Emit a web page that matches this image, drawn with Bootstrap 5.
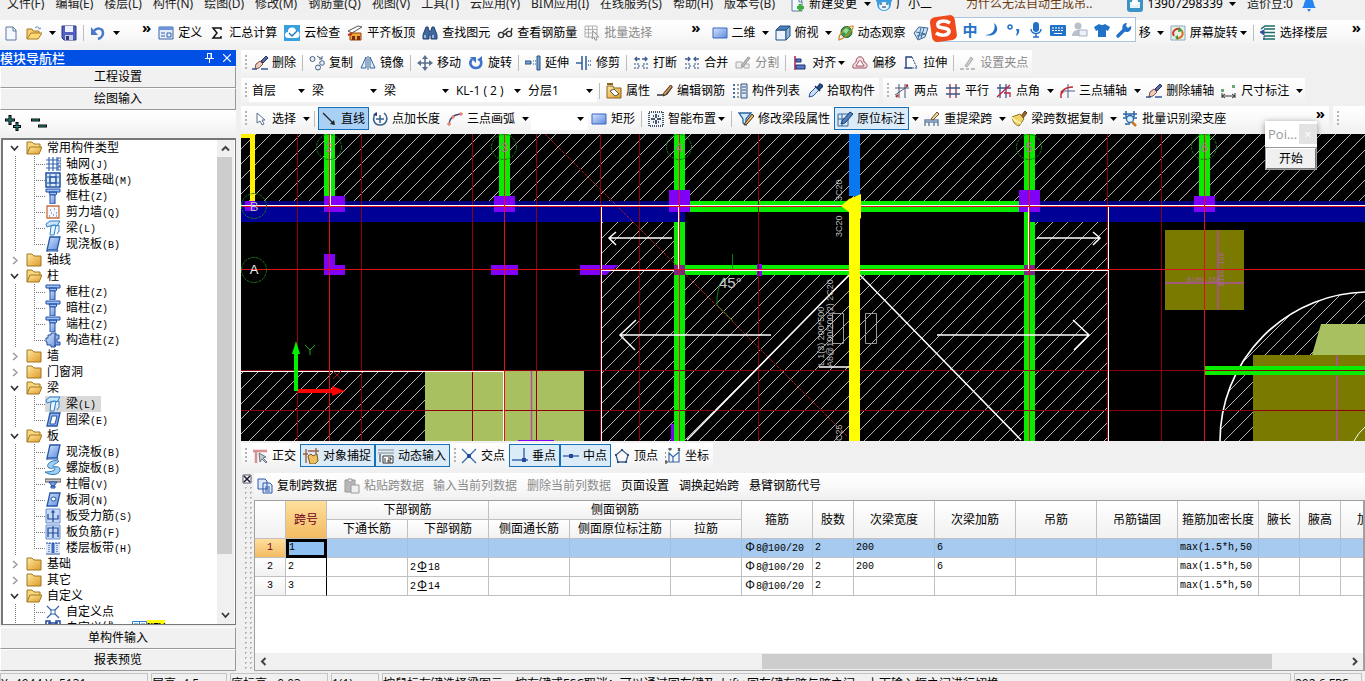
<!DOCTYPE html>
<html lang="zh-CN">
<head>
<meta charset="utf-8">
<meta name="viewport" content="width=device-width, initial-scale=1">
<title>梁原位标注</title>
<link href="https://cdn.jsdelivr.net/npm/bootstrap@5.3.0/dist/css/bootstrap.min.css" rel="stylesheet">
<style>
:root{--face:#f0f0f0;--edge:#a0a0a0;--pick:#1470b8}
body{font:12px/16px "Open Sans","Noto Sans CJK SC",sans-serif;color:#000;background:var(--face);overflow:hidden}
.shell{height:100vh}
.ic{width:16px;height:16px;flex:none}
/* menu strip: the window is scrolled a little under the top edge */
.menus{height:32px;margin-top:-12px;padding-left:7px;flex:none;position:relative;font-family:"Noto Sans","Noto Sans CJK SC",sans-serif}
.menus a{color:#222;text-decoration:none;margin-right:11px}
.menus .tip{color:#6b3a10}
.bar{height:25px;flex:none;background:linear-gradient(#fff,#fafafa 50%,#f1f1f1)}
.bar.main{height:26px}
.strip{height:25px;flex:none;margin-bottom:3px}
.strip.snaps{margin:2px 0 5px}
.grip{width:8px;height:15px;flex:none;background:repeating-linear-gradient(#b4b4b4 0 2px,transparent 2px 4px) 4px 0/2px 100% no-repeat}
.tl{display:inline-flex;align-items:center;gap:4px;height:23px;flex:none;border:1px solid transparent;background:none;padding:0 3px 0 2px;color:#000;font-size:12px;line-height:16px;white-space:nowrap;border-radius:0}
.tl.on{background:#dcebf8;border-color:var(--pick)}
.tl.deep{background:#a9d1f5}
.tl:disabled{color:#8a8a8a}
.tl.txt{padding:0 4px}
.tl .arw{margin-left:-2px}
.arw{width:7px;height:4px;flex:none}
.drop{border:0;background:none;width:12px;height:23px;padding:0;display:inline-flex;align-items:center;justify-content:center;flex:none}
.sep{width:1px;height:16px;background:#bdbdbd;margin:0 3px 0 2px;flex:none}
.pick{appearance:none;border:0;border-radius:0;height:23px;width:72px;padding:0 18px 0 3px;flex:none;font:inherit;color:#000;background:#fff url("data:image/svg+xml,%3Csvg xmlns='http://www.w3.org/2000/svg' width='7' height='4'%3E%3Cpath d='M0 0h7L3.500 4z'/%3E%3C/svg%3E") right 4px center no-repeat}
.pick.short{width:60px}
.pick.radius{width:57px}
.more{border:0;background:none;padding:2px 4px 0;font:700 15px/10px "Open Sans",sans-serif;align-self:start}
.sogou-gap{flex:0 0 200px}
/* navigation panel */
.side{width:236px;flex:none;margin-right:5px}
.side h1{font-size:13px;line-height:16px;margin:0;height:16px;background:#0050e6;color:#fff}
.side h1 button{border:0;background:none;padding:0;color:#fff;width:18px;height:16px;display:flex;align-items:center;justify-content:center}
.sect{display:block;width:100%;height:22px;flex:none;padding:0;background:#f1f1f1;border:1px solid #999;border-top-color:#fff;border-left-color:#fff;font-size:12px;line-height:18px;text-align:center}
.tree{margin:3px 0 2px 1px;border:1px solid #777;border-width:2px 1px 1px 2px;background:#fff;min-height:0;flex:1}
.tree ul{list-style:none;margin:0;padding:0}
.tree .row16{height:16px;display:flex;align-items:center;white-space:nowrap}
.tree .root{padding-left:7px}
.tree .root .ic{margin:0 5px 0 7px}
.kids{background:repeating-linear-gradient(#777 0 1px,transparent 1px 2px) 12px 0/1px 100% no-repeat,repeating-linear-gradient(#777 0 1px,transparent 1px 2px) 31px 0/1px calc(100% - 8px) no-repeat}
.kids .row16{padding-left:31px}
.kids .row16::before{content:"";width:11px;height:1px;flex:none;background:repeating-linear-gradient(90deg,#777 0 1px,transparent 1px 2px)}
.kids span{padding:0 5px 0 5px;height:16px}
.kids .sel .ic,.kids .sel span{background:#d9d9d9}
.kids span i,.mono{font:10px/16px "Liberation Mono",monospace}
.vbar{width:17px;flex:none;background:#f0f0f0;margin-right:1px}
.vbar button,.hbar button{border:0;background:none;padding:0;width:17px;height:17px;display:flex;align-items:center;justify-content:center;flex:none}
.vbar .thumb{flex:0 0 397px;background:#cdcdcd;width:15px}
.hbar{height:17px;background:#f0f0f0;flex:none}
.hbar .thumb{width:46%;height:15px;background:#cdcdcd}
.hbar .rest{flex:0 0 74px}
/* drawing area */
.cad{flex:1;min-height:0;background:#000}
.cad svg{display:block;width:100%;height:100%}
/* span data grid */
.pane{height:198px;flex:none}
.dots{width:9px;flex:1;margin-left:2px;background:radial-gradient(circle,#b4b4b4 1px,transparent 1px) 0 0/5px 5px}
.gridbox{margin-top:2px;border:1px solid var(--edge);border-width:1px 2px 1px 1px;background:#fff;min-width:0}
.spans{table-layout:fixed;width:1149px;border-collapse:separate;border-spacing:0}
.spans th,.spans td{border:solid #c0c0c0;border-width:0 1px 1px 0;height:19px;padding:0 2px;line-height:16px;white-space:nowrap;overflow:hidden}
.spans th{font-weight:400;text-align:center;background:linear-gradient(#fff,#f1f1f1)}
.spans tbody td{font:10px/16px "Liberation Mono","Noto Sans CJK SC",monospace}
.spans td b{display:inline-block;font:12px/14px "Noto Sans CJK SC",sans-serif;width:12px;text-align:center}
.spans td b.hrb{text-decoration:underline}
.spans tbody th{font:10px/16px "Liberation Mono",monospace}
.spans .hot th.hd,.spans th.key{background:linear-gradient(#ffdf9c,#f2bb62);color:#700020}
.spans .hot td{background:#a6caf0;border-right-color:#9dc0e4}
.spans .hot td.cur{background:#8fc1f2;outline:3px solid #000;outline-offset:-3px;padding-left:3px}
.spans td.idx{border-right-color:#000}
.status{height:8px;flex:none;overflow:hidden;margin-top:2px}
.status div{border:1px solid #c4c4c4;height:24px;padding-top:2px;line-height:16px;flex:none;white-space:nowrap;overflow:hidden;margin-right:3px}
/* floating windows */
.ime{position:absolute;top:17px;right:229px;z-index:5;height:25px;background:#fff;border:1px solid #a8c4e0;padding-left:23px;color:#2272c8}
.ime .logo{position:absolute;left:-7px;top:-4px;width:30px;height:30px}
.ime button{border:0;background:none;padding:0;width:22px;height:22px;display:flex;align-items:center;justify-content:center;color:inherit;font:700 15px/22px "Noto Sans CJK SC",sans-serif}
.ime button svg{width:16px;height:16px}
.poi{position:absolute;top:121px;right:48px;width:52px;z-index:5;background:#fff;box-shadow:0 1px 6px #0006}
.poi header{height:26px;color:#999;padding-left:3px;line-height:26px;font-size:13px}
.poi header button{border:0;background:#e3e3e3;color:#fff;width:18px;height:20px;line-height:16px;padding:0}
.poi .go{width:52px;height:23px;border:2px solid;border-color:#fff #777 #777 #fff;outline:1px solid #999;outline-offset:-1px;background:#f0f0f0;padding:0;font-size:12px;line-height:16px}
</style>
</head>
<body>
<svg width="0" height="0" class="position-absolute" aria-hidden="true">
<defs>
<linearGradient id="gb" x1="0" y1="0" x2="1" y2="1"><stop offset="0" stop-color="#d5e4fb"/><stop offset="1" stop-color="#5b8ae0"/></linearGradient>
<linearGradient id="gy" x1="0" y1="0" x2="1" y2="1"><stop offset="0" stop-color="#ffe9a0"/><stop offset="1" stop-color="#e09a28"/></linearGradient>
<symbol id="arw" viewBox="0 0 7 4"><path d="M0 0h7L3.500 4z"/></symbol>
<symbol id="new" viewBox="0 0 16 16"><path d="M3 2h7l3 3v10H3z" fill="#f4f9ff" stroke="#5d7ba0"/><path d="M10 2v4h3" fill="none" stroke="#5d7ba0"/></symbol>
<symbol id="open" viewBox="0 0 16 16"><path d="M1 14V4h5l1 2h6v3" fill="#f5cf72" stroke="#a87a20"/><path d="M1 14l4-6h11l-4 6z" fill="#ffd976" stroke="#a87a20"/><path d="M9 3c2-2 4-1 4 1l2-1" fill="none" stroke="#5080b0"/></symbol>
<symbol id="save" viewBox="0 0 16 16"><path d="M1 1h14v14H3l-2-2z" fill="#5360c0" stroke="#303880"/><path d="M4 1h8v6H4z" fill="#eef2ff"/><path d="M4 10h8v5H4z" fill="#c8d0e8"/><path d="M5 11h3v4H5z" fill="#303880"/></symbol>
<symbol id="undo" viewBox="0 0 16 16"><path d="M4 6c3-4 9-3 9 2 0 3-2 5-5 6" fill="none" stroke="#4a78cc" stroke-width="2.500"/><path d="M1 2v8h7z" fill="#4a78cc"/></symbol>
<symbol id="def" viewBox="0 0 16 16"><path d="M1 2h14v12H1z" fill="#e4eefc" stroke="#3a62a8"/><path d="M1 2h14v3H1z" fill="#6c92d8"/><path d="M3 8h4m-4 3h4M9 8h4v4H9z" stroke="#3a62a8" fill="none"/></symbol>
<symbol id="sum" viewBox="0 0 16 16"><path d="M12 5V3H4l4 5-4 5h8v-2" fill="none" stroke="#111" stroke-width="1.500"/></symbol>
<symbol id="cloud" viewBox="0 0 16 16"><path d="M0 0h16v16H0z" fill="#38a0dc"/><path d="M4 13a3 3 0 010-6 4 4 0 018-1 3.500 3.500 0 010 7z" fill="#fff"/><path d="M5 8l3 3 5-5" fill="none" stroke="#2080c0" stroke-width="1.500"/></symbol>
<symbol id="flat" viewBox="0 0 16 16"><path d="M1 6l10-5 4 1-10 6z" fill="#fff" stroke="#555"/><path d="M3 8h11v7H3z" fill="#f0a838" stroke="#9a4010"/><path d="M5 15v-4h3v4M10 15v-4h3v4" fill="#7a2c10"/><path d="M1 10l4-1" stroke="#c03018" stroke-width="2"/></symbol>
<symbol id="find" viewBox="0 0 16 16"><path d="M1 14v-4l3-8h2l1 4h2l1-4h2l3 8v4H9v-4H7v4z" fill="#4068a0" stroke="#243f70"/><path d="M3 10v3m8-3v3" stroke="#b8d0f0" stroke-width="1.500"/></symbol>
<symbol id="look" viewBox="0 0 16 16"><g fill="none" stroke="#333" stroke-width="1.400"><circle cx="4" cy="10" r="2.600"/><circle cx="12" cy="9" r="2.600"/><path d="M6.500 9.500l3-1M6 7l5-4M14 7l1-4"/></g></symbol>
<symbol id="batch" viewBox="0 0 16 16"><path d="M1 1h12v11H1zM1 4.500h12M1 8h12M4.500 1v12M8.500 1v12" fill="none" stroke="#b0b0b0"/><path d="M9 6l6 6-3 0 1 3-2 0-1-3-2 2z" fill="#eee" stroke="#999"/></symbol>
<symbol id="rect" viewBox="0 0 16 16"><path d="M1 3h14v10H1z" fill="url(#gb)" stroke="#3c64c0"/></symbol>
<symbol id="cube" viewBox="0 0 16 16"><path d="M1 5h10v10H1z" fill="#eaf3ff" stroke="#24507c"/><path d="M1 5l4-4h10l-4 4z" fill="#4c80b8" stroke="#24507c"/><path d="M15 1v10l-4 4V5z" fill="#8fb8e0" stroke="#24507c"/></symbol>
<symbol id="orbit" viewBox="0 0 16 16"><circle cx="8.500" cy="7" r="5.500" fill="#38a050" stroke="#1c6030"/><path d="M1 15C0 9 9 1 15 1c1 3-7 12-14 14z" fill="none" stroke="#c88828" stroke-width="1.200"/><path d="M5 6l3-3 3 2-3 4z" fill="#8fe09a"/></symbol>
<symbol id="part" viewBox="0 0 16 16"><path d="M1 8l5-6 9 1-3 9-7 3z" fill="#cfe3f4" stroke="#3a6a98"/><path d="M3 7l9 2M8 3L5 14M11 3L8 13M4 11l9-2" stroke="#3a6a98"/></symbol>
<symbol id="spin" viewBox="0 0 16 16"><path d="M1 1h14v14H1z" fill="#e4f2e0" stroke="#88a8c8"/><path d="M4 11C1 6 7 2 11 5" fill="none" stroke="#d43838" stroke-width="2"/><path d="M12 6c2 4-1 8-6 7" fill="none" stroke="#e06a28" stroke-width="2"/><path d="M9 2l4 4-5 1zM8 15l-3-3 3-2z" fill="#3c9c40"/></symbol>
<symbol id="floors" viewBox="0 0 16 16"><path d="M1 4l4-3h10M4 4h11M4 7.500h11M4 11h11M3 14h12" fill="none" stroke="#186c68" stroke-width="1.500"/><path d="M0 7l4-2v5zM4 11v4" fill="#3450a0" stroke="#3450a0"/></symbol>
<symbol id="brush" viewBox="0 0 16 16"><path d="M9 6l5-5 2 2-5 5z" fill="#5a6ca8" stroke="#27305c"/><path d="M4 9l4-3 3 3-4 4-4 1z" fill="#e8ccc0" stroke="#8a4a3c"/><path d="M0 14h5m4 0h7" stroke="#3458a0" stroke-width="1.500"/></symbol>
<symbol id="copy" viewBox="0 0 16 16"><g fill="#e8f0fc" stroke="#486080"><circle cx="3.500" cy="4" r="2.500"/><circle cx="13" cy="8" r="2.300"/><circle cx="9" cy="12.500" r="2.500"/><path d="M8 1l5 3m0 0V1m0 3h-3" fill="none"/></g></symbol>
<symbol id="mirror" viewBox="0 0 16 16"><path d="M6 2v11H1zM10 2v11h5z" fill="#e4eefa" stroke="#36649c"/><path d="M8 1v14" stroke="#36649c"/></symbol>
<symbol id="move" viewBox="0 0 16 16"><path d="M8 2v12M2 8h12" stroke="#5a708c" stroke-width="1.600"/><path d="M8 0l3 4H5zM8 16l3-4H5zM0 8l4-3v6zM16 8l-4-3v6z" fill="#5a708c"/></symbol>
<symbol id="turn" viewBox="0 0 16 16"><path d="M4 4c-4 5 0 9 4 9s7-4 4-9" fill="none" stroke="#3c74cc" stroke-width="2.600"/><path d="M2 2h6v6zM14 1v6l-5-2z" fill="#3c74cc"/></symbol>
<symbol id="extend" viewBox="0 0 16 16"><path d="M0 6h6v3H0zM12 1h3v14h-3z" fill="#78a4dc" stroke="#24507c"/><path d="M8 6h3M8 9h3" stroke="#24507c" stroke-dasharray="1 1"/></symbol>
<symbol id="trim" viewBox="0 0 16 16"><path d="M6 1v14M10 1v14M0 8h6" stroke="#36649c" stroke-width="1.600"/><path d="M12 6h3M12 10h3" stroke="#36649c" stroke-width="1.300" stroke-dasharray="1 1"/></symbol>
<symbol id="break" viewBox="0 0 16 16"><path d="M7 4H2m2-2L2 4l2 2M9 4h5m-2-2l2 2-2 2" fill="none" stroke="#3c5890" stroke-width="1.300"/><path d="M1 9h5v4H1M15 9h-5v4h5" fill="none" stroke="#24507c" stroke-dasharray="2 1"/></symbol>
<symbol id="join" viewBox="0 0 16 16"><path d="M1 4h5m-2-2l2 2-2 2M15 4h-5m2-2l-2 2 2 2" fill="none" stroke="#3c5890" stroke-width="1.300"/><path d="M1 9h5v4H1M15 9h-5v4h5" fill="none" stroke="#24507c" stroke-dasharray="2 1"/></symbol>
<symbol id="split" viewBox="0 0 16 16"><path d="M1 7h6v6H1zM9 9h5v4H9z" fill="#eee" stroke="#aaa"/><path d="M6 11l7-9 2 1-7 9z" fill="#bbb" stroke="#999"/></symbol>
<symbol id="align" viewBox="0 0 16 16"><path d="M3 1v14" stroke="#a02050" stroke-width="1.500"/><path d="M4 4h5v3H4zM4 10h9v4H4z" fill="#5878c8" stroke="#202f70"/></symbol>
<symbol id="offset" viewBox="0 0 16 16"><path d="M1 13c-1-4 2-5 3-6 0-7 8-7 8 0 3 1 4 4 2 6z" fill="#f6dde0" stroke="#9a5060"/><path d="M4 11c0-2 2-2 2-3 0-3 4-3 4 0 0 1 2 1 2 3z" fill="#fff" stroke="#9a5060"/></symbol>
<symbol id="stretch" viewBox="0 0 16 16"><path d="M9 2H3v11h6" fill="none" stroke="#24407c" stroke-width="1.400"/><path d="M9 2l5 11H9" fill="none" stroke="#24407c" stroke-dasharray="2 1"/><path d="M1 13h2" stroke="#24407c"/></symbol>
<symbol id="clip" viewBox="0 0 16 16"><path d="M5 11l6-9 2 2-6 8z" fill="#ccc" stroke="#aaa"/><path d="M0 14h4m2 0h3m2 0h4" stroke="#aaa" stroke-width="1.500"/></symbol>
<symbol id="prop" viewBox="0 0 16 16"><path d="M1 3h6l1 2h7v10H1z" fill="url(#gy)" stroke="#8a6418"/><path d="M4 8l4-2 5 5-4 2z" fill="#fff" stroke="#555"/><path d="M1 1h6" stroke="#8a6418" stroke-width="2"/></symbol>
<symbol id="rebar" viewBox="0 0 16 16"><path d="M0 12h6l3-4 4-5 2 1-5 7-4 2" fill="none" stroke="#333" stroke-width="1.300"/><path d="M6 11l8-9 1 2-7 8z" fill="#d8a868" stroke="#704820"/></symbol>
<symbol id="list" viewBox="0 0 16 16"><path d="M1 1h2v2H1zM1 5h2v2H1zM1 9h2v2H1zM1 13h2v2H1z" fill="#4870a8"/><path d="M5 2h2M5 6h2M5 10h2M5 14h2" stroke="#444"/><path d="M9 1h6v14H9z" fill="#dce8fa" stroke="#34507c"/><path d="M10 4h4m-4 3h4m-4 3h4" stroke="#34507c"/></symbol>
<symbol id="drip" viewBox="0 0 16 16"><path d="M2 14l1-4 6-6 3 3-6 6z" fill="#c8e0f8" stroke="#2c5894"/><path d="M8 3l5 5M10 5l3-4 3 2-4 4z" fill="#2c5894" stroke="#1c3868" stroke-width="1.500"/></symbol>
<symbol id="two" viewBox="0 0 16 16"><path d="M5 1v14M11 1v14M1 5h14M1 12L14 3" stroke="#4c5470"/><path d="M2 14l2-2M12 3l2-1" stroke="#c02828" stroke-width="2"/></symbol>
<symbol id="par" viewBox="0 0 16 16"><path d="M5 1v14M11 1v14" stroke="#8a3040" stroke-width="1.300"/><path d="M1 5h14M1 11h14" stroke="#3c548c" stroke-width="1.300"/></symbol>
<symbol id="ang" viewBox="0 0 16 16"><path d="M4 1v14M10 1v14M1 5h14" stroke="#3c548c" stroke-width="1.300"/><path d="M1 14L14 2M8 10h6v4" stroke="#c02040" stroke-width="1.300" fill="none"/></symbol>
<symbol id="arc3" viewBox="0 0 16 16"><path d="M2 15C1 8 6 4 14 4" fill="none" stroke="#c82828" stroke-width="1.500"/><path d="M9 1v14M4 8h12" stroke="#4c5c90"/><circle cx="3" cy="9" r="1.500" fill="#c82828"/></symbol>
<symbol id="dim" viewBox="0 0 16 16"><path d="M1 10v5m0-2h13m0-3v5M4 11l-3 2 3 2M11 11l3 2-3 2" fill="none" stroke="#333"/><path d="M0 6h3v3H0zM11 2h3v3h-3z" fill="#6aa878"/></symbol>
<symbol id="cursor" viewBox="0 0 16 16"><path d="M5 2v10l3-2 2 4 2-1-2-4h3z" fill="#fff" stroke="#567090"/></symbol>
<symbol id="line" viewBox="0 0 16 16"><path d="M2 2l10 10" stroke="#222" stroke-width="1.300"/><path d="M14 14l-1-5-4 4z" fill="#222"/></symbol>
<symbol id="len" viewBox="0 0 16 16"><path d="M4 2C0 6 1 14 8 14s9-8 4-12" fill="none" stroke="#38628c" stroke-width="1.600"/><path d="M8 4v8M4 8h8" stroke="#38628c" stroke-width="1.500"/><path d="M1 4l4-3v4z" fill="#203c70"/></symbol>
<symbol id="arc" viewBox="0 0 16 16"><path d="M2 14C2 8 6 4 13 3" fill="none" stroke="#3c4c70" stroke-width="1.300"/><path d="M1 12h2v2H1zM5 5h2v2H5zM13 2h2v2h-2z" fill="#fff" stroke="#e86048"/></symbol>
<symbol id="smart" viewBox="0 0 16 16"><path d="M1 1h14v14H1z" fill="#f0f6fc" stroke="#456" stroke-width="2" stroke-dasharray="1 1"/><path d="M8 3v4M8 9v4M3 8h4M9 8h4M5 5h1M10 5h1M5 11h1M10 11h1" stroke="#123" stroke-width="1.500"/></symbol>
<symbol id="funnel" viewBox="0 0 16 16"><path d="M1 2h12L8 8v6l-3-2V8z" fill="#cfe8fa" stroke="#2864a0" stroke-width="1.300"/><path d="M7 12l7-9 2 2-7 8-3 1z" fill="#e8b868" stroke="#443018"/></symbol>
<symbol id="mark2" viewBox="0 0 16 16"><path d="M1 3h10v12H1z" fill="#dceaf8" stroke="#35679c"/><path d="M1 8h10M5 3v12" stroke="#35679c"/><path d="M5 10l8-9 3 2-8 9-4 1z" fill="#4c80c0" stroke="#1c3c70"/></symbol>
<symbol id="reget" viewBox="0 0 16 16"><path d="M1 15V9h13v6M5 15v-4m5 4v-4M1 11h13" fill="none" stroke="#6884a8" stroke-width="1.500"/><path d="M7 8l6-7 2 2-6 6z" fill="#f0d8a0" stroke="#6a4a28"/></symbol>
<symbol id="broom" viewBox="0 0 16 16"><path d="M10 5l4-5 2 2-4 5z" fill="#9a6830" stroke="#5c3c18"/><path d="M1 6l8-3 4 5-5 7c-4-1-6-4-7-9z" fill="#f0d468" stroke="#8a7020"/><path d="M1 6c2 4 5 5 9 6" fill="none" stroke="#fff6b8" stroke-width="1.500"/></symbol>
<symbol id="recog" viewBox="0 0 16 16"><path d="M1 3h14M1 7h4m6 0h4M4 0v6m8-6v6M3 13h5" stroke="#2864a8" stroke-width="1.500"/><circle cx="8" cy="8" r="3.500" fill="#d8f0ff" stroke="#2864a8" stroke-width="1.300"/><path d="M10 11l4 4" stroke="#c87820" stroke-width="2.500"/></symbol>
<symbol id="ortho" viewBox="0 0 16 16"><path d="M4 15V4M1 3h14" stroke="#d89090" stroke-width="2.500"/><path d="M7 5l1 9 2-3 4 4 1-1-4-4 3-1z" fill="#c0c8d0" stroke="#6c7480"/></symbol>
<symbol id="snap" viewBox="0 0 16 16"><path d="M3 1v14M0 6h5M5 3h11M13 0v6" stroke="#9a6048" stroke-width="1.400"/><path d="M5 8l3-2 2 2 4-2 1 7-3 3H7z" fill="#f0c060" stroke="#7a5818"/></symbol>
<symbol id="dyn" viewBox="0 0 16 16"><path d="M0 2h16M0 5h16" stroke="#888"/><path d="M5 8h10v7H5z" fill="#fff" stroke="#333"/><path d="M7 10v4M10 10h3v2h-3v2h3M2 6v8" fill="none" stroke="#333"/></symbol>
<symbol id="cross" viewBox="0 0 16 16"><path d="M1 1l14 14M15 1L1 15" stroke="#3868a8" stroke-width="1.300"/><path d="M6 6h4v4H6z" fill="#2448a0"/></symbol>
<symbol id="perp" viewBox="0 0 16 16"><path d="M12 0v12M0 12h16" stroke="#3868a8" stroke-width="1.400"/><path d="M10 10h4v4h-4z" fill="#2448a0"/></symbol>
<symbol id="mid" viewBox="0 0 16 16"><path d="M0 8h16" stroke="#3868a8" stroke-width="1.400"/><path d="M6 6h4v4H6z" fill="#2448a0"/></symbol>
<symbol id="vert" viewBox="0 0 16 16"><path d="M8 2l6 5-2 7H4L2 7z" fill="none" stroke="#3c608c" stroke-width="1.300"/><path d="M7 1h2v2H7zM1 6h2v2H1zM13 6h2v2h-2zM3 13h2v2H3zM11 13h2v2h-2z" fill="#2c4c80"/></symbol>
<symbol id="coord" viewBox="0 0 16 16"><path d="M4 5l4 4 6-5v10H4zM8 14v-5" fill="none" stroke="#3868a8" stroke-width="1.200"/><path d="M4 0h2v2H4zM13 0l2 3M15 0l-2 3M0 5h1M0 9h1M0 13h2v2H0z" fill="none" stroke="#333"/></symbol>
<symbol id="pages" viewBox="0 0 16 16"><path d="M1 1h7l2 2v8H1zM6 5h7l2 2v8H6z" fill="#dce9fb" stroke="#2c58a8"/><path d="M8 9h5m-5 2h5m-5 2h5" stroke="#2c58a8"/></symbol>
<symbol id="paste" viewBox="0 0 16 16"><path d="M1 2h10v12H1z" fill="#b8b8b8" stroke="#999"/><path d="M4 1h4v3H4zM7 7h8v8H7z" fill="#eee" stroke="#999"/></symbol>
<symbol id="fopen" viewBox="0 0 16 16"><path d="M1 14V2h5l2 2h6v3" fill="#f7d880" stroke="#a07820"/><path d="M1 14l3-7h12l-3 7z" fill="url(#gy)" stroke="#a07820"/></symbol>
<symbol id="fold" viewBox="0 0 16 16"><path d="M1 14V2h5l2 2h7v10z" fill="url(#gy)" stroke="#a07820"/></symbol>
<symbol id="cdn" viewBox="0 0 9 9"><path d="M1 2l3.500 4L8 2" fill="none" stroke="#333" stroke-width="1.700"/></symbol>
<symbol id="crt" viewBox="0 0 9 9"><path d="M3 1l4 3.500L3 8" fill="none" stroke="#999" stroke-width="1.400"/></symbol>
<symbol id="t-net" viewBox="0 0 16 16"><path d="M4 1v14M8 1v14M12 1v14M1 4h14M1 8h14M1 12h14" stroke="#3466b0" stroke-width="1.200"/><path d="M13 2h3v3h-3zM13 7h3v3h-3zM13 11h3v3h-3z" fill="#fff" stroke="#3466b0"/></symbol>
<symbol id="t-raft" viewBox="0 0 16 16"><path d="M1 1h14v14H1z" fill="#dce9fb" stroke="#1c50a0" stroke-width="1.500"/><path d="M5 5h6v6H5zM5 2v12M11 2v12M2 5h12M2 11h12" fill="none" stroke="#1c50a0"/></symbol>
<symbol id="t-col" viewBox="0 0 16 16"><path d="M1 1h14v3H1zM4 4h8l-1 3H5z" fill="#9cc0f4" stroke="#2450a8"/><path d="M5 7h5v9H5z" fill="url(#gb)" stroke="#2450a8"/></symbol>
<symbol id="t-wall" viewBox="0 0 16 16"><path d="M2 2h12v12H2z" fill="#f4f6fa" stroke="#c8703c" stroke-width="1.300"/><path d="M5 6h1M9 5h1M11 9h1M6 9h1M8 11h1M4 12h1M11 12h1" stroke="#3864a8"/></symbol>
<symbol id="t-beam" viewBox="0 0 16 16"><path d="M1 4l4-3h10l-3 5-4-1-6 2z" fill="#c8e4fa" stroke="#3080c8"/><path d="M6 6l5-1-2 10H5zM11 6l3-1v6l-2 3" fill="#e8f4ff" stroke="#3080c8"/></symbol>
<symbol id="t-slab" viewBox="0 0 16 16"><path d="M5 1h10l-3 13H2z" fill="url(#gb)" stroke="#2458a8" stroke-width="1.300"/><path d="M2 14v2h10l1-2" fill="none" stroke="#2458a8"/></symbol>
<symbol id="t-ring" viewBox="0 0 16 16"><path d="M5 1h10l-3 13H2z" fill="#8eb0ec" stroke="#2458a8" stroke-width="1.300"/><path d="M7 4h5l-2 8H5z" fill="#fff" stroke="#2458a8"/></symbol>
<symbol id="t-gz" viewBox="0 0 16 16"><path d="M3 3h3V1h5v2h3v4h-2v3h3v3H10v2H6v-2H2v-3H1V6h2z" fill="url(#gb)" stroke="#2450a0"/><path d="M10 2v13" stroke="#1c3c80"/></symbol>
<symbol id="t-spi" viewBox="0 0 16 16"><path d="M14 1C5-1 0 6 4 8c3 1 6-1 6 1s-6 3-10 3c7 5 16 2 15-3-1-4-7-1-7-3s4-2 6-5z" fill="#a0d0f4" stroke="#2878b8"/></symbol>
<symbol id="t-cap" viewBox="0 0 16 16"><path d="M0 3h16v3H0z" fill="#ccc" stroke="#555"/><path d="M4 6h8l-3 4H7zM6 10h4v2H6z" fill="#7ca0e8" stroke="#2450a0"/></symbol>
<symbol id="t-hole" viewBox="0 0 16 16"><path d="M5 1h10l-3 13H2z" fill="url(#gb)" stroke="#2458a8" stroke-width="1.300"/><ellipse cx="8.500" cy="7" rx="2.500" ry="2" fill="#fff" stroke="#2458a8"/></symbol>
<symbol id="t-sf" viewBox="0 0 16 16"><path d="M1 1h14v14H1z" fill="#c4d8f6" stroke="#6a90d0"/><path d="M8 2v12M3 6v5h10V7M6 4h4" fill="none" stroke="#1c4898" stroke-width="1.200"/></symbol>
<symbol id="t-nf" viewBox="0 0 16 16"><path d="M1 1h14v14H1z" fill="#c4d8f6" stroke="#6a90d0"/><path d="M3 13V4h10v9M3 9h10M8 2v12" fill="none" stroke="#1c4898" stroke-width="1.200"/></symbol>
<symbol id="t-band" viewBox="0 0 16 16"><path d="M1 3h14v10H1z" fill="#dce8fa"/><path d="M4 3v10M12 3v10" stroke="#1c4898" stroke-dasharray="1 1"/><path d="M1 14h14" stroke="#1c4898"/><path d="M8 3v10" stroke="#3868c0" stroke-width="3"/><path d="M1 3h14" stroke="#1c4898" stroke-dasharray="2 1"/></symbol>
<symbol id="t-pt" viewBox="0 0 16 16"><path d="M2 2l12 12M14 2L2 14" stroke="#3868a8" stroke-width="1.300"/><path d="M6 6h4v4H6z" fill="#fff" stroke="#3868a8"/></symbol>
<symbol id="t-ln" viewBox="0 0 16 16"><path d="M3 3h10M1 1h4v4H1zM11 1h4v4h-4zM3 5v9" fill="#fff" stroke="#2448a0" stroke-width="1.500"/></symbol>
</defs>
</svg>

<div class="shell d-flex flex-column position-relative">
<nav class="menus d-flex align-items-center text-nowrap" aria-label="菜单">
<a href="#">文件(F)</a><a href="#">编辑(E)</a><a href="#">楼层(L)</a><a href="#">构件(N)</a><a href="#">绘图(D)</a><a href="#">修改(M)</a><a href="#">钢筋量(Q)</a><a href="#">视图(V)</a><a href="#">工具(T)</a><a href="#">云应用(Y)</a><a href="#">BIM应用(I)</a><a href="#">在线服务(S)</a><a href="#">帮助(H)</a><a href="#">版本号(B)</a>
<button class="tl"><svg class="ic"><use href="#new"/><path d="M11 8v7M8 11.500h7" stroke="#3cae3c" stroke-width="3"/></svg>新建变更</button><button class="drop" aria-label="新建变更选项"><svg class="arw"><use href="#arw"/></svg></button>
<button class="tl"><svg class="ic" viewBox="0 0 16 16"><circle cx="8" cy="8" r="7" fill="#3c9ce0"/><circle cx="3" cy="4" r="3" fill="#3c9ce0"/><circle cx="13" cy="4" r="3" fill="#3c9ce0"/><ellipse cx="8" cy="10" rx="5" ry="4" fill="#e8f6ff"/><path d="M5 7v2M11 7v2M6 11h4" stroke="#124"/></svg>广小二</button>
<a href="#" class="tip ms-auto me-2">为什么无法自动生成吊..</a>
<button class="tl ms-4"><svg class="ic" viewBox="0 0 16 16"><rect width="16" height="16" rx="3" fill="#3c94c4"/><path d="M3 6h10v6H3z" fill="#e8f4fc"/><circle cx="8" cy="6" r="3" fill="#fff"/></svg>13907298339</button><button class="drop" aria-label="账号"><svg class="arw"><use href="#arw"/></svg></button>
<a href="#" class="ms-2 me-2">造价豆:0</a>
<svg class="ic me-5" viewBox="0 0 16 16"><path d="M1 12c3-2 1-9 7-10 6 1 4 8 7 10zM6 13h4l-2 3z" fill="#2484f0"/></svg>
</nav>

<div class="bar main d-flex align-items-center mb-1" role="toolbar" aria-label="标准">
<button class="tl" aria-label="新建"><svg class="ic"><use href="#new"/></svg></button><button class="tl" aria-label="打开"><svg class="ic"><use href="#open"/></svg></button><button class="drop" aria-label="最近"><svg class="arw"><use href="#arw"/></svg></button><button class="tl" aria-label="保存"><svg class="ic"><use href="#save"/></svg></button><span class="sep"></span><button class="tl" aria-label="撤销"><svg class="ic"><use href="#undo"/></svg></button><button class="drop" aria-label="撤销列表"><svg class="arw"><use href="#arw"/></svg></button>
<button class="more ms-3">»</button>
<button class="tl"><svg class="ic"><use href="#def"/></svg>定义</button><button class="tl"><svg class="ic"><use href="#sum"/></svg>汇总计算</button><button class="tl"><svg class="ic"><use href="#cloud"/></svg>云检查</button><button class="tl"><svg class="ic"><use href="#flat"/></svg>平齐板顶</button><button class="tl"><svg class="ic"><use href="#find"/></svg>查找图元</button><button class="tl"><svg class="ic"><use href="#look"/></svg>查看钢筋量</button><button class="tl" disabled><svg class="ic"><use href="#batch"/></svg>批量选择</button>
<button class="more ms-auto me-1">»</button>
<button class="tl"><svg class="ic"><use href="#rect"/></svg>二维</button><button class="drop" aria-label="视图模式"><svg class="arw"><use href="#arw"/></svg></button><button class="tl"><svg class="ic"><use href="#cube"/></svg>俯视</button><button class="drop" aria-label="视角"><svg class="arw"><use href="#arw"/></svg></button><button class="tl"><svg class="ic"><use href="#orbit"/></svg>动态观察</button><button class="tl" aria-label="局部三维"><svg class="ic"><use href="#part"/></svg></button><span class="sogou-gap"></span><button class="tl">&nbsp;移</button><button class="drop" aria-label="平移方向"><svg class="arw"><use href="#arw"/></svg></button><button class="tl"><svg class="ic"><use href="#spin"/></svg>屏幕旋转<svg class="arw"><use href="#arw"/></svg></button><span class="sep"></span><button class="tl"><svg class="ic"><use href="#floors"/></svg>选择楼层</button><button class="more ms-3">»</button>
</div>

<div class="d-flex flex-grow-1" style="min-height:0">
<aside class="side d-flex flex-column">
<h1 class="d-flex">模块导航栏<button class="ms-auto" aria-label="固定"><svg width="9" height="10" viewBox="0 0 9 10"><path d="M2.500 0v5m4-5v5M2 .5h5M0 5.500h9M4.500 6v4M6 0v5" stroke="#fff"/></svg></button><button aria-label="关闭"><svg width="8" height="8" viewBox="0 0 8 8"><path d="M0 0l8 8M8 0L0 8" stroke="#fff" stroke-width="1.200"/></svg></button></h1>
<button class="sect">工程设置</button><button class="sect">绘图输入</button>
<div class="bar d-flex align-items-center ps-1 gap-2"><button class="tl px-0" aria-label="全部展开"><svg class="ic" viewBox="0 0 16 16"><path d="M5 0v10M0 5h10M12 7v9M8 11.500h8" stroke="#000" stroke-width="3"/><path d="M5 1v8M1 5h8M12 8v7M9 11.500h6" stroke="#2a9c90"/></svg></button><button class="tl px-0" aria-label="全部折叠"><svg class="ic" viewBox="0 0 16 16"><path d="M0 5h9M7 11h9" stroke="#000" stroke-width="3"/><path d="M1 5h7M8 11h7" stroke="#2a9c90"/></svg></button></div>
<div class="tree d-flex">
<ul class="flex-grow-1 overflow-hidden">
<li><div class="row16 root"><svg width="9" height="9"><use href="#cdn"/></svg><svg class="ic"><use href="#fopen"/></svg>常用构件类型</div>
<ul class="kids"><li class="row16"><svg class="ic"><use href="#t-net"/></svg><span>轴网<i>(J)</i></span></li><li class="row16"><svg class="ic"><use href="#t-raft"/></svg><span>筏板基础<i>(M)</i></span></li><li class="row16"><svg class="ic"><use href="#t-col"/></svg><span>框柱<i>(Z)</i></span></li><li class="row16"><svg class="ic"><use href="#t-wall"/></svg><span>剪力墙<i>(Q)</i></span></li><li class="row16"><svg class="ic"><use href="#t-beam"/></svg><span>梁<i>(L)</i></span></li><li class="row16"><svg class="ic"><use href="#t-slab"/></svg><span>现浇板<i>(B)</i></span></li></ul></li>
<li><div class="row16 root"><svg width="9" height="9"><use href="#crt"/></svg><svg class="ic"><use href="#fold"/></svg>轴线</div></li>
<li><div class="row16 root"><svg width="9" height="9"><use href="#cdn"/></svg><svg class="ic"><use href="#fopen"/></svg>柱</div>
<ul class="kids"><li class="row16"><svg class="ic"><use href="#t-col"/></svg><span>框柱<i>(Z)</i></span></li><li class="row16"><svg class="ic"><use href="#t-col"/></svg><span>暗柱<i>(Z)</i></span></li><li class="row16"><svg class="ic"><use href="#t-col"/></svg><span>端柱<i>(Z)</i></span></li><li class="row16"><svg class="ic"><use href="#t-gz"/></svg><span>构造柱<i>(Z)</i></span></li></ul></li>
<li><div class="row16 root"><svg width="9" height="9"><use href="#crt"/></svg><svg class="ic"><use href="#fold"/></svg>墙</div></li>
<li><div class="row16 root"><svg width="9" height="9"><use href="#crt"/></svg><svg class="ic"><use href="#fold"/></svg>门窗洞</div></li>
<li><div class="row16 root"><svg width="9" height="9"><use href="#cdn"/></svg><svg class="ic"><use href="#fopen"/></svg>梁</div>
<ul class="kids"><li class="row16 sel"><svg class="ic"><use href="#t-beam"/></svg><span>梁<i>(L)</i></span></li><li class="row16"><svg class="ic"><use href="#t-ring"/></svg><span>圈梁<i>(E)</i></span></li></ul></li>
<li><div class="row16 root"><svg width="9" height="9"><use href="#cdn"/></svg><svg class="ic"><use href="#fopen"/></svg>板</div>
<ul class="kids"><li class="row16"><svg class="ic"><use href="#t-slab"/></svg><span>现浇板<i>(B)</i></span></li><li class="row16"><svg class="ic"><use href="#t-spi"/></svg><span>螺旋板<i>(B)</i></span></li><li class="row16"><svg class="ic"><use href="#t-cap"/></svg><span>柱帽<i>(V)</i></span></li><li class="row16"><svg class="ic"><use href="#t-hole"/></svg><span>板洞<i>(N)</i></span></li><li class="row16"><svg class="ic"><use href="#t-sf"/></svg><span>板受力筋<i>(S)</i></span></li><li class="row16"><svg class="ic"><use href="#t-nf"/></svg><span>板负筋<i>(F)</i></span></li><li class="row16"><svg class="ic"><use href="#t-band"/></svg><span>楼层板带<i>(H)</i></span></li></ul></li>
<li><div class="row16 root"><svg width="9" height="9"><use href="#crt"/></svg><svg class="ic"><use href="#fold"/></svg>基础</div></li>
<li><div class="row16 root"><svg width="9" height="9"><use href="#crt"/></svg><svg class="ic"><use href="#fold"/></svg>其它</div></li>
<li><div class="row16 root"><svg width="9" height="9"><use href="#cdn"/></svg><svg class="ic"><use href="#fopen"/></svg>自定义</div>
<ul class="kids"><li class="row16"><svg class="ic"><use href="#t-pt"/></svg><span>自定义点</span></li><li class="row16"><svg class="ic"><use href="#t-ln"/></svg><span class="pe-0">自定义线<i>(X)</i></span><svg width="15" height="14"><path d="M.5.5h14v13H.5zM7.500 0v14M2 3h4M9 3h4" fill="#fff" stroke="#2c80d0"/></svg><b class="mono fw-bold" style="background:#ff0">NEW</b></li></ul></li>
</ul>
<div class="vbar d-flex flex-column"><button aria-label="向上"><svg width="9" height="9" viewBox="0 0 9 9"><path d="M1 6.500L4.500 3 8 6.500" fill="none" stroke="#444" stroke-width="2"/></svg></button><div class="thumb"></div><button class="mt-auto" aria-label="向下"><svg width="9" height="9"><use href="#cdn"/></svg></button></div>
</div>
<button class="sect">单构件输入</button><button class="sect">报表预览</button>
</aside>

<main class="d-flex flex-column flex-grow-1" style="min-width:0">
<div class="strip d-flex"><div class="bar d-flex align-items-center" role="toolbar" aria-label="修改">
<span class="grip"></span><button class="tl"><svg class="ic"><use href="#brush"/></svg>删除</button><span class="sep"></span><button class="tl"><svg class="ic"><use href="#copy"/></svg>复制</button><button class="tl"><svg class="ic"><use href="#mirror"/></svg>镜像</button><span class="sep"></span><button class="tl"><svg class="ic"><use href="#move"/></svg>移动</button><button class="tl"><svg class="ic"><use href="#turn"/></svg>旋转</button><span class="sep"></span><button class="tl"><svg class="ic"><use href="#extend"/></svg>延伸</button><button class="tl"><svg class="ic"><use href="#trim"/></svg>修剪</button><span class="sep"></span><button class="tl"><svg class="ic"><use href="#break"/></svg>打断</button><button class="tl"><svg class="ic"><use href="#join"/></svg>合并</button><button class="tl" disabled><svg class="ic"><use href="#split"/></svg>分割</button><span class="sep"></span><button class="tl"><svg class="ic"><use href="#align"/></svg>对齐<svg class="arw"><use href="#arw"/></svg></button><button class="tl"><svg class="ic"><use href="#offset"/></svg>偏移</button><button class="tl"><svg class="ic"><use href="#stretch"/></svg>拉伸</button><span class="sep"></span><button class="tl" disabled><svg class="ic"><use href="#clip"/></svg>设置夹点</button>
</div></div>

<div class="strip d-flex"><div class="bar d-flex align-items-center" role="toolbar" aria-label="构件">
<span class="grip"></span><select class="pick short" aria-label="楼层"><option>首层</option></select><select class="pick" aria-label="构件类别"><option>梁</option></select><select class="pick" aria-label="构件类型"><option>梁</option></select><select class="pick" aria-label="构件名称"><option>KL-1 ( 2 )</option></select><select class="pick" aria-label="分层"><option>分层1</option></select><span class="sep"></span><button class="tl"><svg class="ic"><use href="#prop"/></svg>属性</button><button class="tl"><svg class="ic"><use href="#rebar"/></svg>编辑钢筋</button><button class="tl"><svg class="ic"><use href="#list"/></svg>构件列表</button><button class="tl"><svg class="ic"><use href="#drip"/></svg>拾取构件</button></div>
<div class="bar d-flex align-items-center ms-1" role="toolbar" aria-label="辅轴"><span class="grip"></span><button class="tl"><svg class="ic"><use href="#two"/></svg>两点</button><button class="tl"><svg class="ic"><use href="#par"/></svg>平行</button><button class="tl"><svg class="ic"><use href="#ang"/></svg>点角</button><button class="drop" aria-label="点角选项"><svg class="arw"><use href="#arw"/></svg></button><button class="tl"><svg class="ic"><use href="#arc3"/></svg>三点辅轴</button><button class="drop" aria-label="三点辅轴选项"><svg class="arw"><use href="#arw"/></svg></button><button class="tl"><svg class="ic"><use href="#brush"/></svg>删除辅轴</button><button class="tl"><svg class="ic"><use href="#dim"/></svg>尺寸标注</button><button class="drop" aria-label="尺寸标注选项"><svg class="arw"><use href="#arw"/></svg></button></div></div>

<div class="strip d-flex"><div class="bar d-flex align-items-center flex-grow-1" role="toolbar" aria-label="绘图">
<span class="grip"></span><button class="tl"><svg class="ic"><use href="#cursor"/></svg>选择</button><button class="drop" aria-label="选择选项"><svg class="arw"><use href="#arw"/></svg></button><span class="sep"></span><button class="tl on deep"><svg class="ic"><use href="#line"/></svg>直线</button><button class="tl"><svg class="ic"><use href="#len"/></svg>点加长度</button><button class="tl"><svg class="ic"><use href="#arc"/></svg>三点画弧</button><button class="drop" aria-label="画弧选项"><svg class="arw"><use href="#arw"/></svg></button><select class="pick radius" aria-label="半径"><option></option></select><button class="tl"><svg class="ic"><use href="#rect"/></svg>矩形</button><span class="sep"></span><button class="tl"><svg class="ic"><use href="#smart"/></svg>智能布置<svg class="arw"><use href="#arw"/></svg></button><span class="sep"></span><button class="tl"><svg class="ic"><use href="#funnel"/></svg>修改梁段属性</button><button class="tl on"><svg class="ic"><use href="#mark2"/></svg>原位标注</button><button class="drop" aria-label="原位标注选项"><svg class="arw"><use href="#arw"/></svg></button><button class="tl"><svg class="ic"><use href="#reget"/></svg>重提梁跨</button><button class="drop" aria-label="重提梁跨选项"><svg class="arw"><use href="#arw"/></svg></button><button class="tl"><svg class="ic"><use href="#broom"/></svg>梁跨数据复制</button><button class="drop" aria-label="复制选项"><svg class="arw"><use href="#arw"/></svg></button><button class="tl"><svg class="ic"><use href="#recog"/></svg>批量识别梁支座</button><button class="more ms-auto">»</button></div>
<div class="bar d-flex align-items-center ms-1 pe-4"><span class="grip"></span></div></div>

<div class="cad">
<svg viewBox="241 134 1124 307" preserveAspectRatio="xMinYMin slice" role="img" aria-label="梁平面图">
<defs><pattern id="hatch" width="15" height="15" patternUnits="userSpaceOnUse"><path d="M-1 16L16-1M-1 1L1-1M14 16l2-2" stroke="#c8c8c8" stroke-width=".9"/></pattern><clipPath id="rnd"><circle cx="1369" cy="441" r="149"/></clipPath></defs>
<path d="M241 134h1124v67H241zM602 222h72v219h-72zM241 372h184v69H241zM685 275h339v166H685zM1035 222h73v219h-73z" fill="url(#hatch)"/>
<path d="M1215 290h150v151h-150z" fill="url(#hatch)" clip-path="url(#rnd)"/>
<path d="M425 371h159v70H425zM1321 324h44v31h-53z" fill="#a8c060"/>
<path d="M1165 230h79v80h-79zM1253 355h112v86h-112z" fill="#7b7a00"/>
<circle cx="1369" cy="441" r="149" fill="none" stroke="#fff" stroke-width="1.600"/><path d="M1354 441q4-8 11-14" fill="none" stroke="#fff"/>
<path d="M531.500 371v70M1218 230v80M1165 283h79M1337 355v86" stroke="#b050a0" stroke-width="1.500"/>
<g font-family="Liberation Mono" font-size="7" fill="#a868a0"><text x="1187" y="282">B100-150</text><text transform="translate(1224 286) rotate(-90)">B100-150</text></g>
<path d="M241 201h444v21H241zM1030 201h335v21h-335z" fill="#000096"/>
<path d="M241 201h444v4H241zM1030 201h335v4h-335z" fill="#000080"/>
<path d="M324 134h11v62h-11zM499 134h11v62h-11zM674 134h11v56h-11zM674 222h11v219h-11zM1024 134h11v56h-11zM1024 212h5v10h-5zM1024 222h11v219h-11zM1199 134h11v62h-11zM690 201h329v11H690zM685 265h339v10H685zM1205 366h160v9h-160z" fill="#08ec00"/>
<path d="M250 134h5v72h-5zM241 134h14v4h-14z" fill="#fff000"/>
<path d="M324 196h21v16h-21zM494 196h21v16h-21zM669 190h21v22h-21zM1019 190h21v22h-21zM1194 196h21v16h-21zM245 201h10v10h-10zM324 254h11v11h10v10h-21zM491 265h27v10h-27zM580 265h39l-13 10h-26zM757 264h5v12h-5zM671 424h3v17h-3zM518 440h36v1h-36z" fill="#8000f8"/>
<path d="M674 265h11v10h-11zM1024 265h11v10h-11z" fill="#7a2888"/>
<path d="M297.500 134v307M361.500 134v307M472.500 134v307M536.500 134v307M600.500 134v307M639.500 134v307M758.500 134v307M1107.500 134v307M1161.500 134v307M241 370.500h1124M241 410.500h1124" stroke="#900008"/>
<path d="M545 134l302 302" stroke="#a81818" stroke-dasharray="3 1"/>
<path d="M241 205.500h1124M330.500 134v71M678.500 207v63M601.500 207v234M602 270.500h72M685 270.500h423M1028.500 207v63M1108.500 207v234M241 371.500h262M503.500 371v70" stroke="#fff"/>
<path d="M329.500 134v307M504.500 134v307M679.500 134v307M1029.500 134v307M1204.500 134v307M241 206.500h1124M241 269.500h1124" stroke="#e01018"/>
<g fill="none" stroke="#fff" stroke-width="1.500"><path d="M672 238h-62m6-6l-7 6 7 7M1037 238h62m-6-6l7 6-7 7M771 335H621m15-15l-16 15 15 15M937 335h151m-15-15l16 15-15 15M849 275L687 440M860 275l161 165M819 367h30"/></g>
<path d="M832.500 313.500h11v30h-11zM865.500 313.500h11v30h-11z" fill="none" stroke="#999"/>
<path d="M849 134h11v62h-11z" fill="#0878f0"/><path d="M849 199l12-5v24l-1 1v222h-11V212l-8-6z" fill="#ff0"/>
<g fill="none" stroke="#187818" stroke-dasharray="3 1"><circle cx="329" cy="147" r="12.500"/><circle cx="504" cy="147" r="12.500"/><circle cx="679" cy="147" r="12.500"/><circle cx="1029" cy="147" r="12.500"/><circle cx="1204" cy="147" r="12.500"/><circle cx="254" cy="206" r="12.500"/><circle cx="254" cy="270" r="12.500"/></g>
<g font-family="Liberation Sans" font-size="13" text-anchor="middle" fill="#a87890"><text x="329" y="152">2</text><text x="504" y="152">3</text><text x="679" y="152">4</text><text x="1029" y="152">5</text><text x="1204" y="152">6</text><text x="254" y="211" fill="#bbb">B</text><text x="254" y="274" fill="#eee">A</text></g>
<path d="M732.500 254v16M724 277q-8 12-7 28l16 16" fill="none" stroke="#108010"/><text x="719" y="288" font-family="Liberation Sans" font-size="15" fill="#ccc">45°</text>
<g font-family="Liberation Sans" font-size="9" fill="#bbb"><text transform="translate(842 201) rotate(-90)">3C20</text><text transform="translate(842 237) rotate(-90)">3C20</text><text transform="translate(824 366) rotate(-90)">L 1(3) 200*500</text><text transform="translate(833 367) rotate(-90)">A8@100/200(2) 2C20</text><text transform="translate(842 446) rotate(-90)">3C25</text></g>
<path d="M294 391v-37h-2l4-13 4 13h-2v37z" fill="#00f000"/><path d="M298 389h34v-3l13 5-13 5v-3h-34z" fill="#f00"/>
<path d="M305 345l5 5 5-5m-5 5v5" fill="none" stroke="#18a818"/><path d="M333 371l8 8m0-8l-8 8" stroke="#981010"/>
</svg>
</div>

<div class="strip snaps d-flex"><div class="bar d-flex align-items-center" role="toolbar" aria-label="捕捉"><span class="grip"></span><button class="tl"><svg class="ic"><use href="#ortho"/></svg>正交</button><button class="tl on"><svg class="ic"><use href="#snap"/></svg>对象捕捉</button><button class="tl on"><svg class="ic"><use href="#dyn"/></svg>动态输入</button><span class="grip"></span><button class="tl"><svg class="ic"><use href="#cross"/></svg>交点</button><button class="tl on"><svg class="ic"><use href="#perp"/></svg>垂点</button><button class="tl on"><svg class="ic"><use href="#mid"/></svg>中点</button><button class="tl"><svg class="ic"><use href="#vert"/></svg>顶点</button><button class="tl"><svg class="ic"><use href="#coord"/></svg>坐标</button></div></div>

<div class="pane d-flex">
<div class="d-flex flex-column" style="flex:0 0 13px"><button class="border-0 bg-transparent p-0 d-flex" aria-label="关闭面板"><svg width="12" height="12" viewBox="0 0 12 12"><path d="M2 2h8v8H2z" fill="#fff" stroke="#556"/><path d="M3 3l6 6M9 3L3 9" stroke="#213" stroke-width="1.500"/></svg></button><div class="dots"></div></div>
<div class="d-flex flex-column flex-grow-1" style="min-width:0">
<div class="bar d-flex align-items-center" role="toolbar" aria-label="跨数据"><button class="tl"><svg class="ic"><use href="#pages"/></svg>复制跨数据</button><button class="tl" disabled><svg class="ic"><use href="#paste"/></svg>粘贴跨数据</button><button class="tl txt" disabled>输入当前列数据</button><button class="tl txt" disabled>删除当前列数据</button><button class="tl txt">页面设置</button><button class="tl txt">调换起始跨</button><button class="tl txt">悬臂钢筋代号</button></div>
<div class="gridbox d-flex flex-column flex-grow-1">
<div class="flex-grow-1 overflow-hidden">
<table class="spans"><colgroup><col style="width:31px"><col style="width:41px"><col style="width:81px"><col style="width:81px"><col style="width:81px"><col style="width:101px"><col style="width:71px"><col style="width:71px"><col style="width:41px"><col style="width:81px"><col style="width:81px"><col style="width:81px"><col style="width:81px"><col style="width:81px"><col style="width:41px"><col style="width:41px"><col style="width:81px"></colgroup>
<thead><tr><th rowspan="2"></th><th rowspan="2" class="key">跨号</th><th colspan="2">下部钢筋</th><th colspan="3">侧面钢筋</th><th rowspan="2">箍筋</th><th rowspan="2">肢数</th><th rowspan="2">次梁宽度</th><th rowspan="2">次梁加筋</th><th rowspan="2">吊筋</th><th rowspan="2">吊筋锚固</th><th rowspan="2">箍筋加密长度</th><th rowspan="2">腋长</th><th rowspan="2">腋高</th><th rowspan="2">加腋钢筋</th></tr>
<tr><th>下通长筋</th><th>下部钢筋</th><th>侧面通长筋</th><th>侧面原位标注筋</th><th>拉筋</th></tr></thead>
<tbody>
<tr class="hot"><th class="hd">1</th><td class="cur">1</td><td></td><td></td><td></td><td></td><td></td><td><b>Φ</b>8@100/20</td><td>2</td><td>200</td><td>6</td><td></td><td></td><td>max(1.5*h,50</td><td></td><td></td><td></td></tr>
<tr><th>2</th><td class="idx">2</td><td></td><td>2<b class="hrb">Φ</b>18</td><td></td><td></td><td></td><td><b>Φ</b>8@100/20</td><td>2</td><td>200</td><td>6</td><td></td><td></td><td>max(1.5*h,50</td><td></td><td></td><td></td></tr>
<tr><th>3</th><td class="idx">3</td><td></td><td>2<b class="hrb">Φ</b>14</td><td></td><td></td><td></td><td><b>Φ</b>8@100/20</td><td>2</td><td></td><td></td><td></td><td></td><td>max(1.5*h,50</td><td></td><td></td><td></td></tr>
</tbody></table></div>
<div class="hbar d-flex align-items-center"><button aria-label="向左"><svg width="9" height="9" viewBox="0 0 9 9"><path d="M6.500 1L3 4.500 6.500 8" fill="none" stroke="#444" stroke-width="2"/></svg></button><div class="thumb ms-auto"></div><div class="rest"></div><button aria-label="向右"><svg width="9" height="9" viewBox="0 0 9 9"><path d="M3 1l3.500 3.500L3 8" fill="none" stroke="#444" stroke-width="2"/></svg></button></div>
</div></div></div>
</main>
</div>

<footer class="status d-flex"><div style="width:148px">X=4944 Y=5131</div><div style="width:76px">层高: 4.5</div><div style="width:98px">底标高: -0.03</div><div style="width:48px">1(1)</div><div class="flex-grow-1" style="flex-basis:0">按鼠标左键选择梁图元，按右键或ESC取消；可以通过回车键及shift+回车键在跨与跨之间、上下输入框之间进行切换</div><div style="width:68px">292.6 FPS</div></footer>

<div class="ime d-flex align-items-center"><svg class="logo" viewBox="0 0 30 30"><rect x="2" y="2" width="25" height="25" rx="5" fill="#f04a1c" transform="rotate(-8 15 15)"/><path d="M21 9C14 5 7 8 9 12c2 3 12 1 11 6-1 4-9 4-13 1" fill="none" stroke="#fff" stroke-width="3.500"/></svg>
<button>中</button><button aria-label="月亮"><svg viewBox="0 0 16 16"><path d="M10 1c7 5 2 15-9 12 8 0 11-6 9-12z" fill="#2272c8"/></svg></button><button aria-label="标点"><svg viewBox="0 0 16 16"><circle cx="4" cy="5" r="2" fill="none" stroke="#2272c8" stroke-width="1.500"/><path d="M10 7h3c1 3-1 6-3 7l1-4z" fill="#2272c8"/></svg></button><button aria-label="语音"><svg viewBox="0 0 16 16"><rect x="5" y="0" width="6" height="10" rx="3" fill="#2272c8"/><path d="M3 7c0 6 10 6 10 0M8 12v3M5 15h6" fill="none" stroke="#2272c8" stroke-width="1.500"/></svg></button><button aria-label="键盘"><svg viewBox="0 0 16 16"><rect y="3" width="16" height="11" rx="1" fill="#2272c8"/><path d="M2 6h12M2 8.500h12" stroke="#fff" stroke-width="1.200" stroke-dasharray="2 1"/><path d="M4 11.500h8" stroke="#fff"/></svg></button><button aria-label="账户"><svg viewBox="0 0 16 16"><circle cx="6" cy="4" r="3.500" fill="#b8c0c8"/><path d="M0 14c0-8 12-8 12 0z" fill="#b8c0c8"/><path d="M7 8h8v6H7z" fill="#eef" stroke="#a8b0b8"/></svg></button><button aria-label="皮肤"><svg viewBox="0 0 16 16"><path d="M5 2q3 2 6 0l5 3-2 4-2-1v7H4V8L2 9 0 5z" fill="#2272c8"/></svg></button><button aria-label="工具"><svg viewBox="0 0 16 16"><path d="M2 14l7-7" stroke="#2272c8" stroke-width="3.500" stroke-linecap="round"/><path d="M15 4a4.500 4.500 0 11-4-3l-1 3 2 2z" fill="#2272c8"/></svg></button></div>

<section class="poi"><header class="d-flex align-items-center justify-content-between">Poi...<button aria-label="关闭">×</button></header><button class="go">开始</button></section>
</div>
<script src="https://cdn.jsdelivr.net/npm/bootstrap@5.3.0/dist/js/bootstrap.bundle.min.js"></script>
</body>
</html>
